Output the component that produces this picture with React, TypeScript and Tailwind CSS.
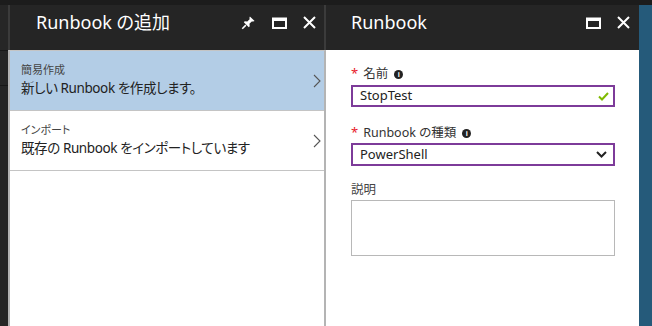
import React from 'react';

const font = { fontFamily: '"Noto Sans", "Noto Sans CJK JP", sans-serif' };

function PinIcon() {
    return (
        <svg width="15" height="15" viewBox="0 0 16 16" fill="white">
            <path d="M9.5 1.5 L14.5 6.5 L13 7 L11.5 6.8 L9 9.3 L9.3 12 L8.3 13 L3 7.7 L4 6.7 L6.7 7 L9.2 4.5 L9 3 Z" />
            <path d="M5.2 10.8 L1.3 14.7" stroke="white" strokeWidth="1.6" />
        </svg>
    );
}

function MaxIcon() {
    return (
        <svg width="15" height="12" viewBox="0 0 15 12" fill="none">
            <rect x="1" y="1.5" width="13" height="9.5" stroke="white" strokeWidth="2" />
            <rect x="1" y="1" width="13" height="3" fill="white" />
        </svg>
    );
}

function CloseIcon() {
    return (
        <svg width="13" height="13" viewBox="0 0 13 13">
            <path d="M1 1 L12 12 M12 1 L1 12" stroke="white" strokeWidth="2" />
        </svg>
    );
}

function Chevron() {
    return (
        <svg width="8" height="14" viewBox="0 0 8 14" fill="none">
            <path d="M1 1 L7 7 L1 13" stroke="#555" strokeWidth="1.1" />
        </svg>
    );
}

function Info() {
    return (
        <span className="ml-[6px] inline-flex w-[9px] h-[9px] rounded-full bg-[#222] text-white text-[7px] font-bold leading-none items-center justify-center">i</span>
    );
}

interface ItemProps {
    label: string;
    text: string;
    active?: boolean;
}

function MenuItem({ label, text, active }: ItemProps) {
    return (
        <div className={`flex items-center h-[60px] border-b border-[#c4c4c4] pl-[11px] pr-[3px] ${active ? 'bg-[#b3cde6]' : 'bg-white'}`}>
            <div className="flex-1 flex flex-col">
                <span className="text-[11px] text-[#444] leading-[14px]">{label}</span>
                <span className="text-[13.5px] tracking-[-0.4px] text-[#222] leading-[20px] mt-[1px]">{text}</span>
            </div>
            <Chevron />
        </div>
    );
}

export default function App() {
    return (
        <div className="w-[652px] h-[326px] bg-[#1c1c1c] flex flex-col overflow-hidden [font-feature-settings:'palt']" style={font}>
            <div className="h-[5px] shrink-0" />
            <div className="flex flex-1">
                {/* left strip */}
                <div className="w-[8px] bg-[#262626] flex flex-col">
                    <div className="h-[45px]" />
                    <div className="h-[1px] bg-[#181818]" />
                    <div className="h-[34px]" />
                    <div className="h-[1px] bg-[#181818]" />
                </div>

                {/* panel 1 */}
                <div className="w-[318px] flex flex-col">
                    <div className="h-[45px] bg-[#252525] border-x-2 border-[#3b3b3b] flex items-center pl-[26px] pr-[8px]">
                        <span className="text-white text-[18px] flex-1 -mt-[10px]">Runbook の追加</span>
                        <div className="flex items-center gap-[16px] -mt-[10px]">
                            <PinIcon />
                            <MaxIcon />
                            <CloseIcon />
                        </div>
                    </div>
                    <div className="flex-1 bg-white border-x-2 border-[#b4b4b4] border-t border-t-[#c4c4c4]">
                        <MenuItem label="簡易作成" text="新しい Runbook を作成します。" active />
                        <MenuItem label="インポート" text="既存の Runbook をインポートしています" />
                    </div>
                </div>

                {/* panel 2 */}
                <div className="w-[313px] flex flex-col">
                    <div className="h-[45px] bg-[#252525] flex items-center pl-[25px] pr-[9px]">
                        <span className="text-white text-[18px] flex-1 -mt-[10px]">Runbook</span>
                        <div className="flex items-center gap-[16px] -mt-[10px]">
                            <MaxIcon />
                            <CloseIcon />
                        </div>
                    </div>
                    <div className="flex-1 bg-white pl-[25px] pr-[24px] pt-[15px]">
                        <div className="flex items-center text-[12.5px] text-[#333] h-[18px]">
                            <span className="text-[#e8202a] mr-[5px] text-[13px]">*</span>
                            名前
                            <Info />
                        </div>
                        <div className="mt-[2px] h-[22px] border-2 border-[#7d3b99] flex items-center pl-[7px] pr-[4px]">
                            <span className="flex-1 text-[13px] text-[#222]">StopTest</span>
                            <svg width="11" height="9" viewBox="0 0 11 9" fill="none">
                                <path d="M1 4.5 L4 7.5 L10 1" stroke="#7fba00" strokeWidth="2" />
                            </svg>
                        </div>
                        <div className="mt-[17px] flex items-center text-[12.5px] text-[#333] h-[18px]">
                            <span className="text-[#e8202a] mr-[5px] text-[13px]">*</span>
                            Runbook の種類
                            <Info />
                        </div>
                        <div className="mt-[1px] h-[23px] border-2 border-[#7d3b99] flex items-center pl-[7px] pr-[6px]">
                            <span className="flex-1 text-[13px] text-[#222]">PowerShell</span>
                            <svg width="11" height="7" viewBox="0 0 11 7" fill="none">
                                <path d="M1 1 L5.5 5.5 L10 1" stroke="#222" strokeWidth="2" />
                            </svg>
                        </div>
                        <div className="mt-[15px] text-[12.5px] text-[#444] h-[18px]">説明</div>
                        <div className="mt-[1px] h-[56px] border border-[#b8b8b8]" />
                    </div>
                </div>

                {/* right strip */}
                <div className="flex-1 bg-[#255a7a]" />
            </div>
        </div>
    );
}
